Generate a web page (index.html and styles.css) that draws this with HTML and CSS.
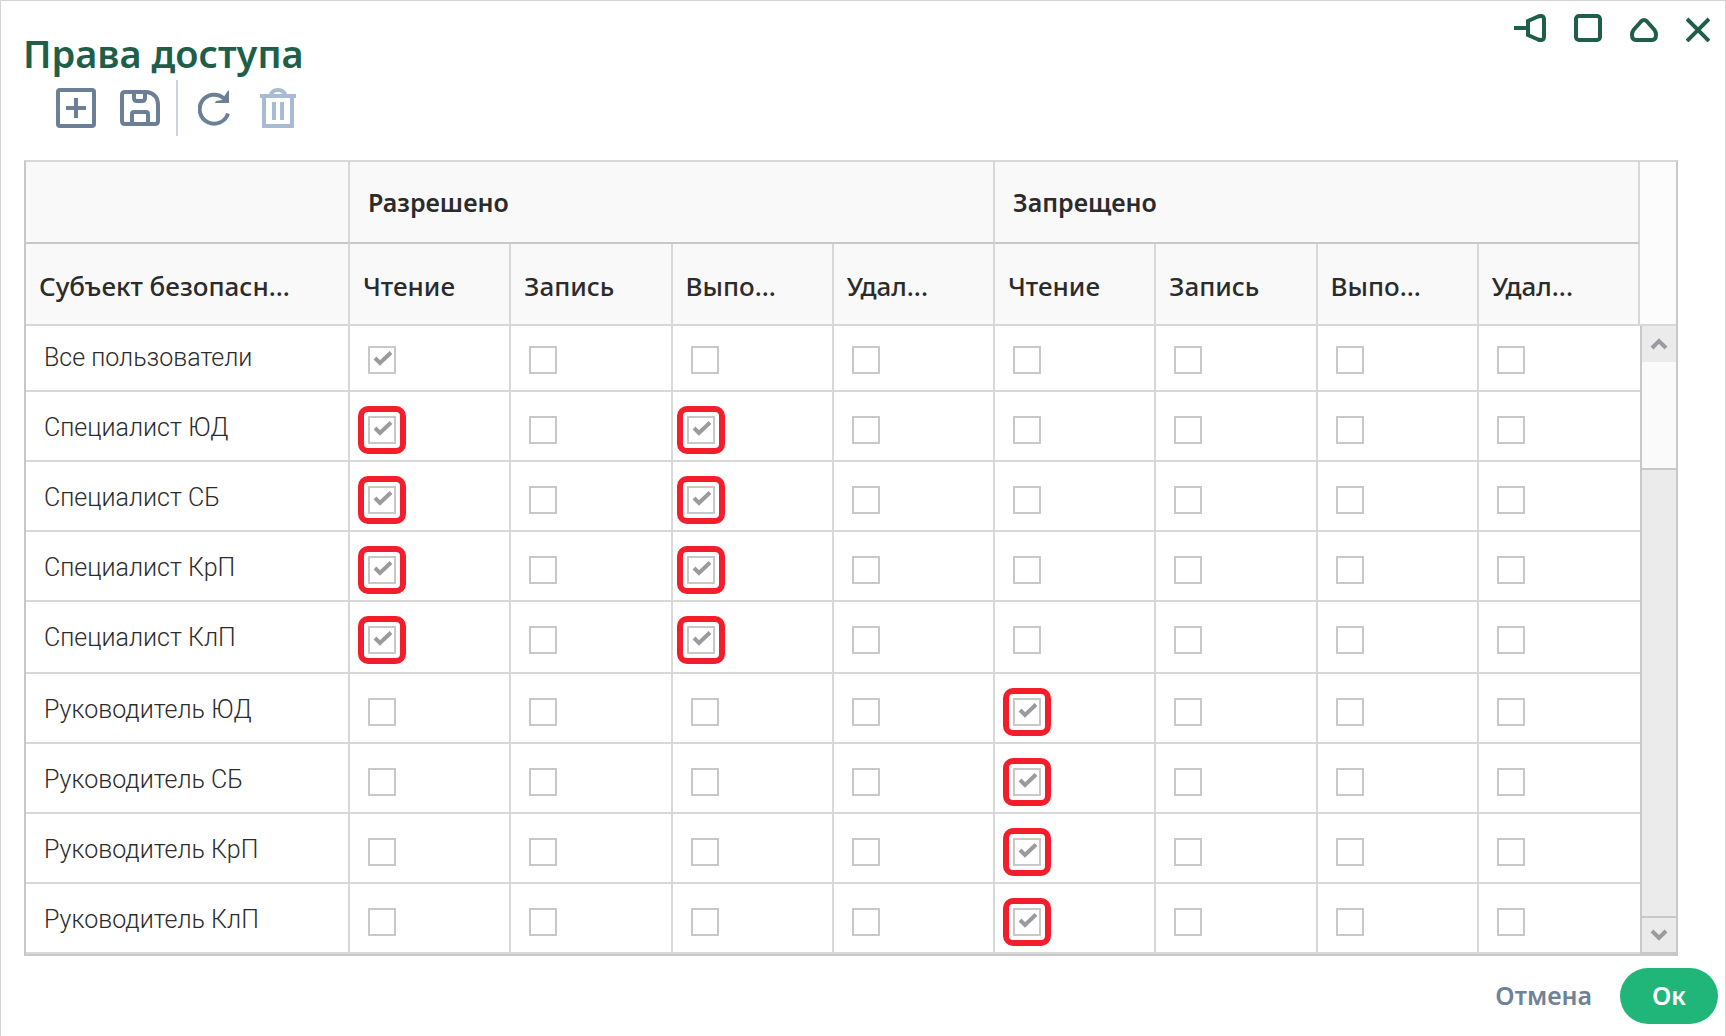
FILE: index.html
```html
<!DOCTYPE html>
<html lang="ru">
<head>
    <meta charset="utf-8">
    <title>Права доступа</title>
    <link rel="stylesheet" href="styles.css">
</head>
<body>
    <div class="dialog">
        <header class="dialog-header">
            <h1 class="title">Права доступа</h1>
            <div class="window-buttons">
                <button type="button" class="icon-button" aria-label="Закрепить">
                    <svg width="32" height="28" viewBox="0 0 32 28"><path d="M0 14h13M14 7v14l10 4.500q6 2 6-3V5.500q0-5-6-3z"/></svg>
                </button>
                <button type="button" class="icon-button" aria-label="Развернуть">
                    <svg width="28" height="28" viewBox="0 0 28 28"><rect x="2" y="2" width="24" height="24" rx="3"/></svg>
                </button>
                <button type="button" class="icon-button" aria-label="Свернуть">
                    <svg width="28" height="28" viewBox="0 0 28 28"><path d="M11 7.500q3-3 6 0l7.500 8.500q1.500 2 1.500 5q0 5-4 5H6q-4 0-4-5q0-3 1.500-5z"/></svg>
                </button>
                <button type="button" class="icon-button" aria-label="Закрыть">
                    <svg width="24" height="28" viewBox="0 0 24 28"><path d="M1 5l22 22M23 5L1 27"/></svg>
                </button>
            </div>
        </header>

        <div class="toolbar">
            <button type="button" class="icon-button" aria-label="Добавить">
                <svg width="40" height="40" viewBox="0 0 40 40"><rect x="2" y="2" width="36" height="36" rx="2"/><path d="M20 10v20M10 20h20"/></svg>
            </button>
            <button type="button" class="icon-button" aria-label="Сохранить">
                <svg width="40" height="40" viewBox="0 0 40 40"><path d="M5 4h22q11 2 11 13v16q0 3-3 3H5q-3 0-3-3V7q0-3 3-3zM14 4v6q0 3 3 3h5q3 0 3-3V4M12 36V26q0-2 2-2h12q2 0 2 2v10"/></svg>
            </button>
            <span class="separator"></span>
            <button type="button" class="icon-button refresh" aria-label="Обновить">
                <svg width="32" height="40" viewBox="0 0 32 40"><path d="M30 25.500A14.500 14.500 0 1 1 26 10.500"/><path class="solid" d="M31 2v13H17l1-2 6-1 5-8z"/></svg>
            </button>
            <button type="button" class="icon-button trash" aria-label="Удалить">
                <svg width="36" height="40" viewBox="0 0 36 40"><path d="M0 8h36M4 8v30h28V8M11 7q1-5 7-5t7 5M14 14v18M22 14v18"/></svg>
            </button>
        </div>

        <div class="grid">
            <table class="rights">
                <thead>
                    <tr class="groups">
                        <th class="subject-column"></th>
                        <th colspan="4" scope="colgroup">Разрешено</th>
                        <th colspan="4" scope="colgroup">Запрещено</th>
                    </tr>
                    <tr class="columns">
                        <th scope="col">Субъект безопасн...</th>
                        <th scope="col">Чтение</th>
                        <th scope="col">Запись</th>
                        <th scope="col">Выпо...</th>
                        <th scope="col">Удал...</th>
                        <th scope="col">Чтение</th>
                        <th scope="col">Запись</th>
                        <th scope="col">Выпо...</th>
                        <th scope="col">Удал...</th>
                    </tr>
                </thead>
                <tbody id="rightsBody"></tbody>
            </table>
            <div class="rail">
                <div class="rail-head"></div>
                <div class="scrollbar">
                    <button type="button" class="scroll-button" aria-label="Вверх">
                        <svg width="18" height="12" viewBox="0 0 18 12"><path d="M2 10l7-7 7 7"/></svg>
                    </button>
                    <div class="thumb"></div>
                    <button type="button" class="scroll-button down" aria-label="Вниз">
                        <svg width="18" height="12" viewBox="0 0 18 12"><path d="M2 2l7 7 7-7"/></svg>
                    </button>
                </div>
            </div>
        </div>

        <footer class="dialog-footer">
            <button type="button" class="cancel">Отмена</button>
            <button type="button" class="ok">Ок</button>
        </footer>
    </div>

    <script>
        const columns = [
            'Разрешено: чтение', 'Разрешено: запись', 'Разрешено: выполнение', 'Разрешено: удаление',
            'Запрещено: чтение', 'Запрещено: запись', 'Запрещено: выполнение', 'Запрещено: удаление'
        ];

        // checked / marked: column indexes
        const rows = [
            { name: 'Все пользователи', checked: [0], marked: [] },
            { name: 'Специалист ЮД', checked: [0, 2], marked: [0, 2] },
            { name: 'Специалист СБ', checked: [0, 2], marked: [0, 2] },
            { name: 'Специалист КрП', checked: [0, 2], marked: [0, 2] },
            { name: 'Специалист КлП', checked: [0, 2], marked: [0, 2] },
            { name: 'Руководитель ЮД', checked: [4], marked: [4] },
            { name: 'Руководитель СБ', checked: [4], marked: [4] },
            { name: 'Руководитель КрП', checked: [4], marked: [4] },
            { name: 'Руководитель КлП', checked: [4], marked: [4] }
        ];

        const body = document.getElementById('rightsBody');

        rows.forEach(row => {
            const tr = body.insertRow();
            const th = document.createElement('th');
            th.scope = 'row';
            th.textContent = row.name;
            tr.appendChild(th);

            columns.forEach((column, i) => {
                const td = tr.insertCell();
                const input = document.createElement('input');
                input.type = 'checkbox';
                input.className = 'check';
                input.checked = row.checked.includes(i);
                input.setAttribute('aria-label', `${row.name}, ${column}`);

                if (row.marked.includes(i)) {
                    const mark = document.createElement('div');
                    mark.className = 'mark';
                    mark.appendChild(input);
                    td.className = i === 2 ? 'marked execute' : 'marked';
                    td.appendChild(mark);
                } else {
                    td.appendChild(input);
                }
            });
        });
    </script>
</body>
</html>
```

FILE: styles.css
```css
* {
    box-sizing: border-box;
}
body {
    margin: 0;
    background: #fff;
    color: #2b2b2b;
    font-family: "Noto Sans", "Open Sans", sans-serif;
    font-size: 25px;
}
button {
    padding: 0;
    border: none;
    background: none;
    color: inherit;
    font-family: inherit;
    cursor: pointer;
}
svg {
    display: block;
    fill: none;
    stroke: currentColor;
    stroke-width: 4;
}
.dialog {
    display: flex;
    flex-direction: column;
    min-height: 100vh;
    border: 1px solid #d4d4d4;
}
.dialog-header {
    display: flex;
    justify-content: space-between;
    align-items: flex-start;
    padding: 13px 15px 0 22px;
    color: #1f5f4a;
}
.title {
    margin: 14px 0 2px;
    font-size: 38px;
    line-height: 50px;
    font-weight: 600;
}
.window-buttons {
    display: flex;
    gap: 28px;
}
.toolbar {
    display: flex;
    align-items: center;
    gap: 24px;
    height: 56px;
    padding-left: 55px;
    color: #6b7f97;
}
.separator {
    width: 2px;
    height: 56px;
    margin-left: -8px;
    margin-right: -4px;
    background: #c8d4e2;
}
.refresh .solid {
    fill: currentColor;
    stroke: none;
}
.trash {
    margin-left: 6px;
    color: #a9bbd2;
}
.grid {
    display: grid;
    grid-template-columns: 1fr 36px;
    margin: 24px 47px 0 23px;
    border: 2px solid #c8c8c8;
    border-top-color: #d8d8d8;
}
.rights {
    width: 100%;
    table-layout: fixed;
    border-collapse: separate;
    border-spacing: 0;
}
.rights th,
.rights td {
    padding: 0;
    border-right: 2px solid #d8d8d8;
    border-bottom: 2px solid #d8d8d8;
    text-align: left;
    vertical-align: top;
    white-space: nowrap;
}
.rights thead th {
    height: 82px;
    background: #f9f9f9;
    line-height: 40px;
}
.rights .groups th {
    padding: 20px 0 0 18px;
    border-bottom-color: #c8c8c8;
    font-weight: 600;
}
.rights .subject-column {
    width: 324px;
}
.rights .columns th {
    padding: 22px 0 0 13px;
    font-size: 26px;
    font-weight: 500;
}
.rights tbody th,
.rights tbody td {
    height: 70px;
    padding: 24px 0 0 18px;
    line-height: 28px;
}
.rights tbody th {
    padding-top: 22px;
    font-family: Roboto, sans-serif;
    font-weight: 300;
}
.rights tbody tr:first-child > * {
    height: 66px;
    padding-top: 20px;
}
.rights tbody tr:first-child th {
    padding-top: 18px;
}
.rights tbody tr:nth-child(5) > * {
    height: 72px;
}
.rights tbody td:last-child {
    border-right: none;
}
.rights tbody .marked {
    padding: 14px 0 0 8px;
}
.rights tbody .execute {
    padding-left: 4px;
}
.mark {
    width: 48px;
    height: 48px;
    padding: 4px;
    border: 6px solid #f31d2b;
    border-radius: 10px;
}
.check {
    appearance: none;
    display: block;
    width: 28px;
    height: 28px;
    margin: 0;
    border: 2px solid #c8c8c8;
    background: #fff;
}
.check:checked {
    background: #fff url("data:image/svg+xml,%3Csvg xmlns='http://www.w3.org/2000/svg' viewBox='0 0 24 24'%3E%3Cpath d='M5 10l5 5L21 4.500' fill='none' stroke='%239b9b9f' stroke-width='4'/%3E%3C/svg%3E") center / 24px 24px no-repeat;
}
.rail {
    display: flex;
    flex-direction: column;
}
.rail-head {
    height: 164px;
    border-bottom: 2px solid #d8d8d8;
    background: #fcfcfc;
}
.scrollbar {
    flex: 1;
    display: flex;
    flex-direction: column;
    border-left: 2px solid #c8c8c8;
    border-bottom: 2px solid #c8c8c8;
    background: #ebebeb;
}
.scroll-button {
    display: flex;
    align-items: center;
    justify-content: center;
    height: 36px;
    color: #9b9b9f;
}
.scroll-button.down {
    margin-top: auto;
    border-top: 2px solid #c8c8c8;
}
.thumb {
    height: 108px;
    border-bottom: 2px solid #c8c8c8;
    background: #fafafa;
}
.dialog-footer {
    display: flex;
    justify-content: flex-end;
    align-items: center;
    gap: 28px;
    padding: 12px 7px;
}
.cancel,
.ok {
    height: 56px;
    padding-bottom: 3px;
    font-size: 25px;
    font-weight: 600;
}
.cancel {
    color: #6f8297;
}
.ok {
    width: 98px;
    border-radius: 28px;
    background: #20b67a;
    color: #fff;
}
```
